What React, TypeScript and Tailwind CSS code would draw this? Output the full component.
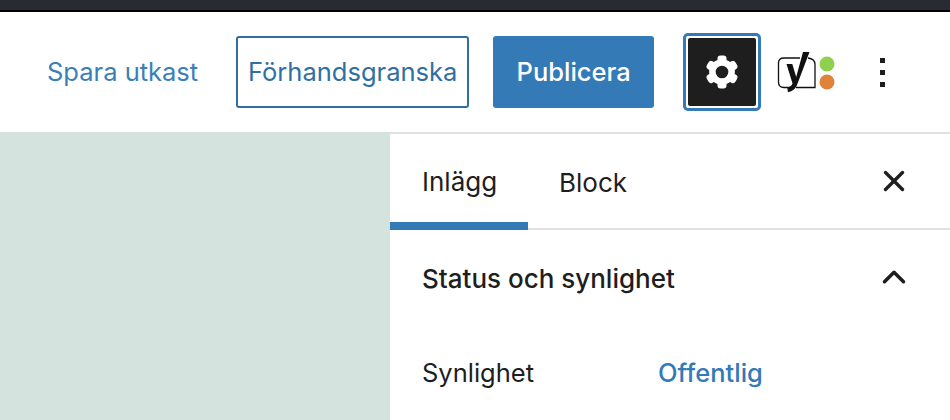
import React from 'react';
import { X, ChevronUp } from 'lucide-react';

const font = "font-['Inter','Noto_Sans',sans-serif]";

const GearIcon = () => (
  <svg width="34" height="34" viewBox="-17 -17 34 34">
    <circle r="9.600" fill="none" stroke="#fff" strokeWidth="6.500" />
    {[0, 60, 120, 180, 240, 300].map((deg) => (
      <rect key={deg} x="-4.500" y="-16.500" width="9" height="7" rx="3" fill="#fff" transform={`rotate(${deg})`} />
    ))}
  </svg>
);

const YoastIcon = () => (
  <svg width="60" height="44" viewBox="0 0 60 44">
    <path
      d="M25 8H9C5.500 8 3.500 10 3.500 13v19c0 3.500 2 5.500 5.500 5.500h6M33 8c4 .5 7 2.500 7 6.500v23H21"
      fill="none"
      stroke="#111"
      strokeWidth="1.300"
    />
    <path d="M28 2h6.500L22 35c-1.600 4-4.500 6.400-9 7.300L12.200 37.500c2.800-.6 4.600-1.800 5.300-4L11.500 14h5.800l3.900 13z" fill="#111" />
    <circle cx="52" cy="14" r="7.500" fill="#8fd14f" />
    <circle cx="52" cy="32" r="7.500" fill="#e0823a" />
  </svg>
);

const App: React.FC = () => {
  return (
    <div className={`w-[950px] h-[420px] overflow-hidden flex flex-col bg-white ${font}`}>
      <div className="h-[10px] bg-[#2a2a33]" />
      <div className="h-[2px] bg-black" />

      <header className="h-[120px] flex items-center bg-white">
        <button className="ml-[47px] text-[25.500px] text-[#3a7fb8]">Spara utkast</button>
        <button className="ml-[38px] w-[233px] h-[72px] rounded-[3px] border-2 border-[#2f6fa3] text-[25.500px] text-[#2f6fa3] whitespace-nowrap flex items-center justify-center">
          Förhandsgranska
        </button>
        <button className="ml-[24px] w-[161px] h-[72px] rounded-[3px] bg-[#337ab7] text-[25.500px] font-medium text-white">
          Publicera
        </button>
        <button className="ml-[29px] w-[78px] h-[78px] rounded-[5px] border-[3px] border-[#337ab7] bg-white p-[2px]">
          <span className="w-full h-full rounded-[2px] bg-[#1e1e1e] flex items-center justify-center">
            <GearIcon />
          </span>
        </button>
        <div className="ml-[14px] w-[60px] flex">
          <YoastIcon />
        </div>
        <div className="ml-[45px] w-[5px] flex flex-col gap-[7px]">
          <span className="w-[5px] h-[5px] bg-[#1e1e1e]" />
          <span className="w-[5px] h-[5px] bg-[#1e1e1e]" />
          <span className="w-[5px] h-[5px] bg-[#1e1e1e]" />
        </div>
      </header>

      <div className="flex-1 flex min-h-0">
        <main className="w-[390px] bg-[#d5e3de]" />
        <aside className="flex-1 flex flex-col">
          <div className="h-[2px] bg-[#e0e0e0]" />
          <div className="h-[96px] flex items-stretch border-b-2 border-[#e0e0e0]">
            <div className="w-[138px] flex items-center pl-[32px] text-[26px] text-[#1e1e1e] border-b-[8px] border-[#337ab7] -mb-[2px] pt-[7px]">
              Inlägg
            </div>
            <div className="ml-[31px] flex items-center text-[26px] text-[#1e1e1e] pt-[7px] pb-[5px]">
              Block
            </div>
            <div className="ml-auto mr-[39px] flex items-center pb-[1px]">
              <X size={34} strokeWidth={2.400} color="#1e1e1e" />
            </div>
          </div>
          <div className="h-[96px] flex items-center justify-between pl-[32px] pr-[37px]">
            <span className="text-[26px] font-medium text-[#1e1e1e]">Status och synlighet</span>
            <ChevronUp size={38} strokeWidth={2.200} color="#1e1e1e" className="-mt-[3px]" />
          </div>
          <div className="mt-[28px] flex items-center pl-[32px] text-[25.500px]">
            <span className="w-[236px] text-[#1e1e1e]">Synlighet</span>
            <span className="text-[#337ab7] font-medium">Offentlig</span>
          </div>
        </aside>
      </div>
    </div>
  );
};

export default App;
